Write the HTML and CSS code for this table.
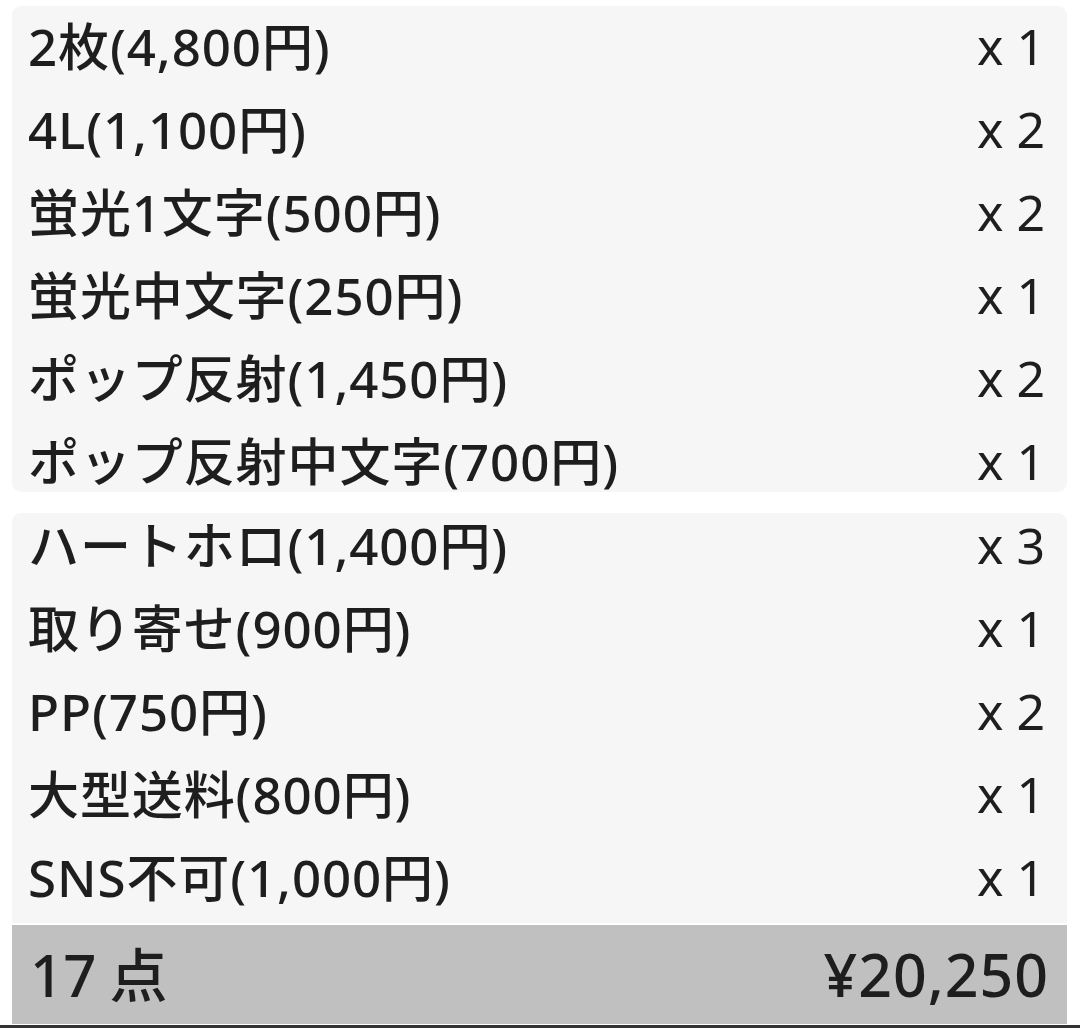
FILE: index.html
```html
<!DOCTYPE html>
<html lang="ja">
<head>
<meta charset="utf-8">
<link rel="stylesheet" href="styles.css">
</head>
<body>
<div class="page">
  <div class="panel panel-top">
    <div class="row"><span class="name">2枚(4,800円)</span><span class="qty">x 1</span></div>
    <div class="row"><span class="name">4L(1,100円)</span><span class="qty">x 2</span></div>
    <div class="row"><span class="name">蛍光1文字(500円)</span><span class="qty">x 2</span></div>
    <div class="row"><span class="name">蛍光中文字(250円)</span><span class="qty">x 1</span></div>
    <div class="row"><span class="name">ポップ反射(1,450円)</span><span class="qty">x 2</span></div>
    <div class="row"><span class="name">ポップ反射中文字(700円)</span><span class="qty">x 1</span></div>
  </div>
  <div class="panel panel-bottom">
    <div class="list">
      <div class="row"><span class="name">ハートホロ(1,400円)</span><span class="qty">x 3</span></div>
      <div class="row"><span class="name">取り寄せ(900円)</span><span class="qty">x 1</span></div>
      <div class="row"><span class="name">PP(750円)</span><span class="qty">x 2</span></div>
      <div class="row"><span class="name">大型送料(800円)</span><span class="qty">x 1</span></div>
      <div class="row"><span class="name">SNS不可(1,000円)</span><span class="qty">x 1</span></div>
    </div>
  </div>
  <div class="footer">
    <span class="count">17 点</span>
    <span class="total">¥20,250</span>
  </div>
</div>
<div class="edge"></div>
</body>
</html>
```

FILE: styles.css
```css
html, body {
  margin: 0;
  padding: 0;
  background: #ffffff;
}
body {
  width: 1080px;
  height: 1028px;
  overflow: hidden;
  font-family: "Noto Sans", "Noto Sans CJK JP", sans-serif;
  font-weight: 500;
  color: #1e1e1e;
}
.page {
  padding: 6px 13px 0 12px;
  display: flex;
  flex-direction: column;
}
.panel {
  background: #f6f6f6;
  border-radius: 9px;
}
.panel-top {
  height: 486px;
}
.panel-bottom {
  margin-top: 21px;
  height: 410px;
  border-radius: 9px 9px 0 0;
}
.panel-bottom .list {
  margin-top: -8px;
}
.row {
  height: 83px;
  box-sizing: border-box;
  display: flex;
  align-items: center;
  justify-content: space-between;
  padding: 0 22px 3px 16px;
  font-size: 51px;
  line-height: 1;
}
.name {
  letter-spacing: 0.9px;
}
.qty {
  font-size: 50px;
  font-weight: 400;
  word-spacing: 0;
}
.footer {
  margin-top: 2px;
  height: 99px;
  background: #c0c0c0;
  display: flex;
  align-items: center;
  justify-content: space-between;
  padding: 0 18px 0 18px;
  font-size: 58px;
  line-height: 1;
}
.count {
  word-spacing: -2px;
}
.total {
  letter-spacing: 1px;
  font-size: 59px;
}
.edge {
  height: 3px;
  margin-top: 1px;
  background: #333333;
}
```
